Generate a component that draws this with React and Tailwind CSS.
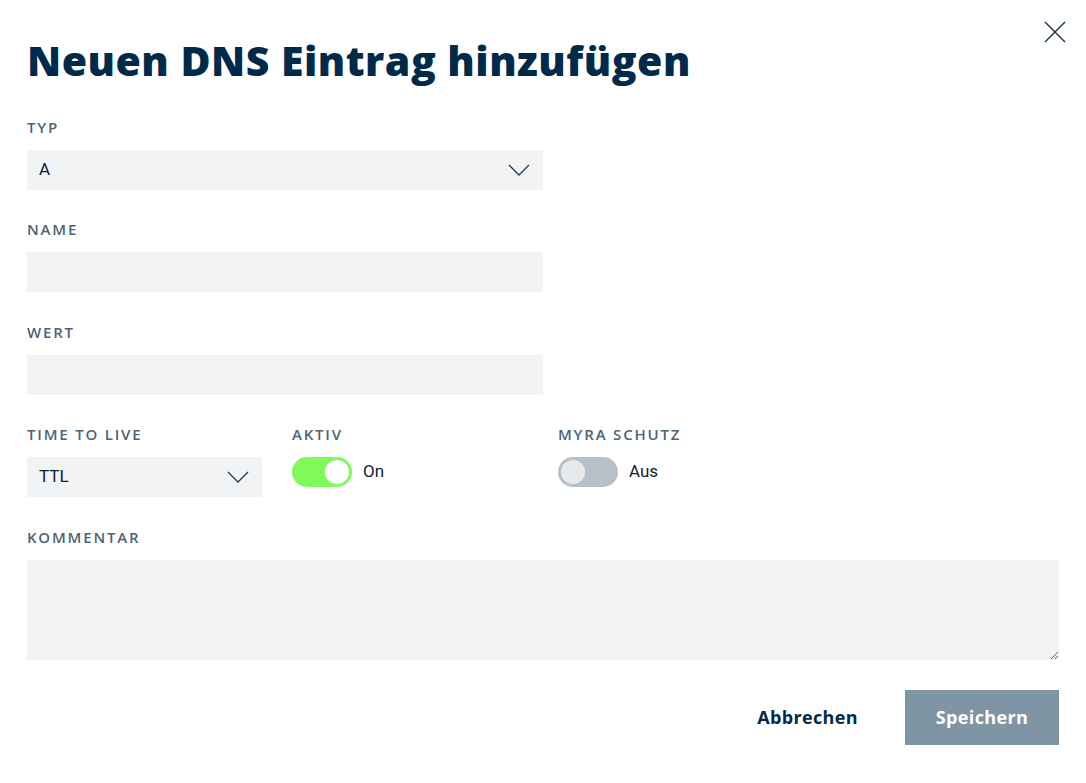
import React, { useState } from 'react';

const labelClass =
  'block text-[15px] font-semibold uppercase tracking-[0.12em] text-[#4d6476] mb-[14px] leading-[18px]';

function Chevron() {
  return (
    <svg width="22" height="12" viewBox="0 0 22 12" fill="none">
      <path d="M1 1l10 10L21 1" stroke="#1e3a56" strokeWidth="1.3" />
    </svg>
  );
}

function SelectBox({ value, className }) {
  return (
    <div
      className={`h-10 bg-[#f2f3f5] flex items-center justify-between pl-3 pr-[13px] text-[17px] text-[#0d2238] ${className}`}
      style={{ fontFamily: 'Roboto, sans-serif' }}
    >
      <span>{value}</span>
      <Chevron />
    </div>
  );
}

function Toggle({ on, onChange, label }) {
  return (
    <div className="flex items-center gap-[11px]">
      <button
        type="button"
        onClick={onChange}
        className={`w-[60px] h-[30px] rounded-full p-[3px] flex items-center ${
          on ? 'bg-[#80fa58] justify-end' : 'bg-[#b5c0c8] justify-start'
        }`}
      >
        <span
          className={`w-6 h-6 rounded-full ${on ? 'bg-white' : 'bg-[#e7eaed]'}`}
        />
      </button>
      <span className="text-[17px] text-[#0d2238]" style={{ fontFamily: 'Roboto, sans-serif' }}>
        {label}
      </span>
    </div>
  );
}

export default function App() {
  const [aktiv, setAktiv] = useState(true);
  const [schutz, setSchutz] = useState(false);

  return (
    <div
      className="relative w-[1086px] h-[783px] bg-white px-[27px] pt-[35px]"
      style={{ fontFamily: '"Open Sans", sans-serif' }}
    >
      <button type="button" className="absolute right-[20px] top-[21px]">
        <svg width="22" height="22" viewBox="0 0 22 22" fill="none">
          <path d="M1 1l20 20M21 1L1 21" stroke="#12304d" strokeWidth="1.4" />
        </svg>
      </button>

      <h1 className="text-[41px] font-extrabold text-[#002a4a] leading-[50px] tracking-[0.012em]">
        Neuen DNS Eintrag hinzufügen
      </h1>

      <div className="mt-[33px] w-[516px]">
        <label className={labelClass}>Typ</label>
        <SelectBox value="A" />
      </div>

      <div className="mt-[30px] w-[516px]">
        <label className={labelClass}>Name</label>
        <input className="block w-full h-10 bg-[#f2f3f5] outline-none px-3" />
      </div>

      <div className="mt-[31px] w-[516px]">
        <label className={labelClass}>Wert</label>
        <input className="block w-full h-10 bg-[#f2f3f5] outline-none px-3" />
      </div>

      <div className="mt-[30px] flex">
        <div className="w-[265px]">
          <label className={labelClass}>Time to live</label>
          <SelectBox value="TTL" className="w-[235px]" />
        </div>
        <div className="w-[266px]">
          <label className={labelClass}>Aktiv</label>
          <Toggle on={aktiv} onChange={() => setAktiv(!aktiv)} label={aktiv ? 'On' : 'Aus'} />
        </div>
        <div>
          <label className={labelClass}>Myra Schutz</label>
          <Toggle on={schutz} onChange={() => setSchutz(!schutz)} label={schutz ? 'On' : 'Aus'} />
        </div>
      </div>

      <div className="mt-[31px]">
        <label className={labelClass}>Kommentar</label>
        <textarea className="block w-full h-[100px] bg-[#f2f3f5] outline-none p-3" />
      </div>

      <div className="mt-[30px] flex justify-end items-center gap-[47px]">
        <button type="button" className="text-[18px] font-bold tracking-[0.02em] text-[#002a4a]">
          Abbrechen
        </button>
        <button
          type="button"
          className="w-[154px] h-[55px] bg-[#7f95a3] text-white text-[18px] font-bold tracking-[0.02em]"
        >
          Speichern
        </button>
      </div>
    </div>
  );
}
